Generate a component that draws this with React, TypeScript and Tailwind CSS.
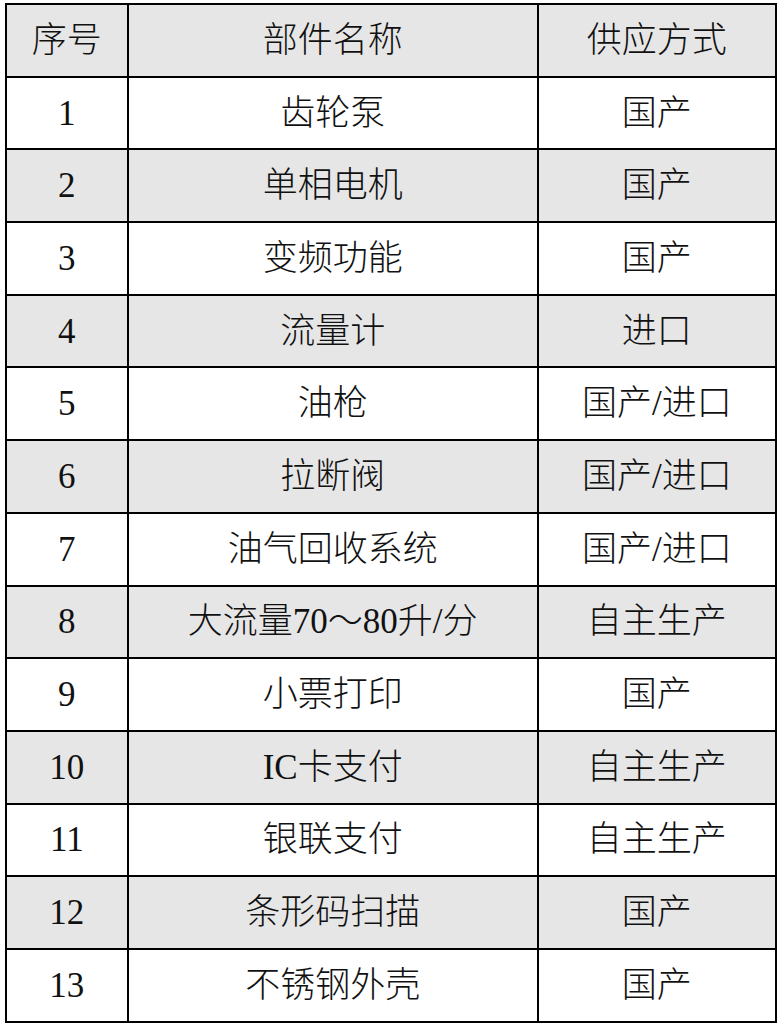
import React from "react";

const rows: [string, string, string][] = [
  ["1", "齿轮泵", "国产"],
  ["2", "单相电机", "国产"],
  ["3", "变频功能", "国产"],
  ["4", "流量计", "进口"],
  ["5", "油枪", "国产/进口"],
  ["6", "拉断阀", "国产/进口"],
  ["7", "油气回收系统", "国产/进口"],
  ["8", "大流量70～80升/分", "自主生产"],
  ["9", "小票打印", "国产"],
  ["10", "IC卡支付", "自主生产"],
  ["11", "银联支付", "自主生产"],
  ["12", "条形码扫描", "国产"],
  ["13", "不锈钢外壳", "国产"],
];

const font = { fontFamily: '"Liberation Serif", "Noto Sans CJK SC", serif' };

export default function App() {
  return (
    <div className="w-[782px] h-[1029px] bg-white pl-[5px] pt-[3px]">
      <table
        className="border-collapse w-[772px] text-[35px] text-[#111] font-light leading-none"
        style={font}
      >
        <colgroup>
          <col className="w-[122px]" />
          <col className="w-[411px]" />
          <col className="w-[239px]" />
        </colgroup>
        <thead>
          <tr className="h-[72.7px] bg-[#e6e6e6]">
            <th className="border-2 border-black font-light text-center">序号</th>
            <th className="border-2 border-black font-light text-center">部件名称</th>
            <th className="border-2 border-black font-light text-center">供应方式</th>
          </tr>
        </thead>
        <tbody>
          {rows.map((r, i) => (
            <tr
              key={r[0]}
              className={i % 2 === 1 ? "h-[72.7px] bg-[#e6e6e6]" : "h-[72.7px] bg-white"}
            >
              <td className="border-2 border-black text-center p-0">{r[0]}</td>
              <td className="border-2 border-black text-center p-0">{r[1]}</td>
              <td className="border-2 border-black text-center p-0">{r[2]}</td>
            </tr>
          ))}
        </tbody>
      </table>
    </div>
  );
}
